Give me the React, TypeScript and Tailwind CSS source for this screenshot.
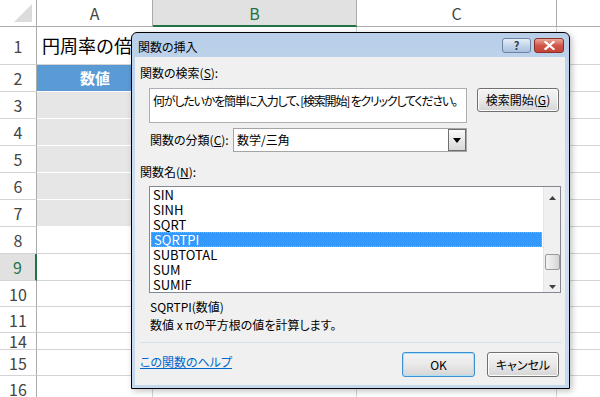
import React from 'react';

const rows = [
  { n: '1', h: 'h-[38px]' },
  { n: '2', h: 'h-[27px]' },
  { n: '3', h: 'h-[27px]' },
  { n: '4', h: 'h-[27px]' },
  { n: '5', h: 'h-[27px]' },
  { n: '6', h: 'h-[27px]' },
  { n: '7', h: 'h-[27px]' },
  { n: '8', h: 'h-[27px]' },
  { n: '9', h: 'h-[27px]' },
  { n: '10', h: 'h-[26px]' },
  { n: '11', h: 'h-[26px]' },
  { n: '14', h: 'h-[17px]' },
  { n: '15', h: 'h-[26px]' },
  { n: '16', h: 'h-[26px]' },
];

const funcs = ['SIN', 'SINH', 'SQRT', 'SQRTPI', 'SUBTOTAL', 'SUM', 'SUMIF'];

function CellA({ n }: { n: string }) {
  if (n === '1') {
    return (
      <div className="w-[116px] h-full border-b border-[#d4d4d4] flex items-center pl-[5px] whitespace-nowrap text-[18px] text-black overflow-visible">
        円周率の倍数の平方根
      </div>
    );
  }
  if (n === '2') {
    return (
      <div className="w-[116px] h-full bg-[#5b9bd5] border-b border-white flex items-center justify-center text-white font-bold text-[15px]">
        数値
      </div>
    );
  }
  if (['3', '4', '5', '6', '7'].includes(n)) {
    return <div className="w-[116px] h-full bg-[#e7e6e6] border-b border-white" />;
  }
  return <div className="w-[116px] h-full border-r border-b border-[#d4d4d4]" />;
}

function Sheet() {
  return (
    <div className="flex flex-col font-['Noto_Sans_CJK_JP',sans-serif]">
      <div className="flex h-[27px] text-[16px] text-[#444]">
        <div className="w-[37px] h-full border-r border-b border-[#ababab] flex items-end justify-end pr-[3px] pb-[3px]">
          <svg width="20" height="20" viewBox="0 0 20 20">
            <polygon points="19,1 19,19 1,19" fill="#dcdcdc" />
          </svg>
        </div>
        <div className="w-[116px] h-full border-r border-b border-[#ababab] flex items-center justify-center">A</div>
        <div className="w-[204px] h-full bg-[#e1e1e1] border-r border-[#ababab] border-b-2 border-b-[#217346] flex items-center justify-center text-[#217346]">B</div>
        <div className="w-[200px] h-full border-r border-b border-[#ababab] flex items-center justify-center">C</div>
        <div className="flex-1 h-full border-b border-[#ababab]" />
      </div>
      {rows.map((r) => (
        <div key={r.n} className={`flex ${r.h}`}>
          <div
            className={
              r.n === '9'
                ? 'w-[37px] h-full bg-[#e1e1e1] border-r-2 border-r-[#217346] border-b border-b-[#d4d4d4] flex items-center justify-center text-[16px] leading-none text-[#217346]'
                : 'w-[37px] h-full border-r border-r-[#ababab] border-b border-b-[#d4d4d4] flex items-center justify-center text-[16px] leading-none text-[#444]'
            }
          >
            {r.n}
          </div>
          <CellA n={r.n} />
          <div className="w-[204px] h-full border-r border-b border-[#d4d4d4]" />
          <div className="w-[200px] h-full border-r border-b border-[#d4d4d4]" />
          <div className="flex-1 h-full border-b border-[#d4d4d4]" />
        </div>
      ))}
    </div>
  );
}

function WinButton({ children, primary, className }: { children: React.ReactNode; primary?: boolean; className: string }) {
  return (
    <div
      className={`${className} rounded-[3px] border flex items-center justify-center text-[12px] text-black bg-gradient-to-b from-[#f4f4f4] via-[#e9e9e9] to-[#d5d5d5] ${
        primary ? 'border-[#3c8fd0] shadow-[inset_0_0_0_1px_#a9e1fb]' : 'border-[#707070] shadow-[inset_0_0_0_1px_#fcfcfc]'
      }`}
    >
      {children}
    </div>
  );
}

function Dialog() {
  return (
    <div className="absolute left-[131px] top-[32px] w-[439px] h-[357px] border border-black rounded-t-[6px] bg-gradient-to-b from-[#b9cfe9] via-[#d0e0f2] to-[#c4d8ee] flex flex-col shadow-[2px_2px_6px_rgba(0,0,0,0.25)] font-['Noto_Sans_CJK_JP',sans-serif] [font-feature-settings:'palt']">
      <div className="h-[24px] flex items-start pl-[6px] pr-[5px]">
        <div className="text-[12px] text-black mt-[5px]">関数の挿入</div>
        <div className="ml-auto flex gap-[3px] mt-[5px]">
          <div className="w-[29px] h-[15px] rounded-[3px] border border-[#6d83a3] bg-gradient-to-b from-[#e5eef8] via-[#c5d6ea] to-[#a9c1de] flex items-center justify-center text-[11px] font-bold text-[#2b3b52] leading-none">
            ?
          </div>
          <div className="w-[30px] h-[15px] rounded-[3px] border border-[#8a3028] bg-gradient-to-b from-[#e9a99a] via-[#d0584a] to-[#c4443a] flex items-center justify-center">
            <svg width="11" height="9" viewBox="0 0 11 9">
              <path d="M1.5 1 L9.5 8 M9.5 1 L1.5 8" stroke="#fff" strokeWidth="2.2" strokeLinecap="square" />
            </svg>
          </div>
        </div>
      </div>
      <div className="flex-1 ml-[3px] mr-[4px] mb-[3px] bg-[#f0f0f0] flex flex-col pl-[5px] text-[12px] text-black">
        <div className="mt-[7px] h-[18px] leading-[18px]">
          関数の検索(<span className="underline">S</span>):
        </div>
        <div className="mt-[6px] flex items-start">
          <div className="ml-[9px] w-[318px] h-[35px] border border-[#abadb3] bg-white pl-[3px] pt-[5px] leading-[14px] whitespace-nowrap overflow-hidden tracking-[-1.2px]">
            何がしたいかを簡単に入力して、[検索開始] をクリックしてください。
          </div>
          <WinButton className="ml-[10px] w-[82px] h-[24px]">
            検索開始(<span className="underline">G</span>)
          </WinButton>
        </div>
        <div className="mt-[5px] flex items-center h-[24px]">
          <div className="pl-[10px] w-[93px]">
            関数の分類(<span className="underline">C</span>):
          </div>
          <div className="w-[234px] h-[24px] border border-[#a5a5a5] bg-white flex items-center">
            <div className="flex-1 pl-[3px]">数学/三角</div>
            <div className="w-[18px] h-[22px] border border-[#6f6f6f] bg-gradient-to-b from-[#fafafa] to-[#d8d8d8] flex items-center justify-center">
              <svg width="8" height="5" viewBox="0 0 8 5">
                <polygon points="0,0 8,0 4,5" fill="#000" />
              </svg>
            </div>
          </div>
        </div>
        <div className="mt-[11px] h-[18px] leading-[18px]">
          関数名(<span className="underline">N</span>):
        </div>
        <div className="mt-[5px] ml-[9px] w-[412px] h-[107px] border border-[#828790] bg-white flex text-[13px]">
          <div className="flex-1 flex flex-col pr-[1px]">
            {funcs.map((f) => (
              <div
                key={f}
                className={
                  f === 'SQRTPI'
                    ? 'h-[15px] leading-[13px] pl-[2px] ml-[1px] bg-[#3399ff] text-white border border-dotted border-[#e0a060]'
                    : 'h-[15px] leading-[15px] pl-[3px]'
                }
              >
                {f}
              </div>
            ))}
          </div>
          <div className="w-[17px] h-full bg-[#f0f0f0] border-l border-[#e6e6e6] flex flex-col items-center">
            <svg className="mt-[9px]" width="7" height="4" viewBox="0 0 7 4">
              <polygon points="0,4 7,4 3.5,0" fill="#404040" />
            </svg>
            <div className="mt-[54px] w-[15px] h-[16px] rounded-[2px] border border-[#9a9a9a] bg-gradient-to-r from-[#f4f4f4] via-[#e6e6e6] to-[#d4d4d4]" />
            <svg className="mt-[15px]" width="7" height="4" viewBox="0 0 7 4">
              <polygon points="0,0 7,0 3.5,4" fill="#404040" />
            </svg>
          </div>
        </div>
        <div className="mt-[5px] pl-[10px] h-[18px] leading-[18px]">SQRTPI(数値)</div>
        <div className="pl-[10px] h-[18px] leading-[18px]">数値 x πの平方根の値を計算します。</div>
        <div className="mt-[8px] w-[421px] h-px bg-[#d5dfe5]" />
        <div className="mt-[9px] w-[421px] flex items-start pr-[2px]">
          <div className="mt-[1px] text-[#0066cc] underline">この関数のヘルプ</div>
          <WinButton primary className="ml-auto w-[73px] h-[25px]">
            OK
          </WinButton>
          <WinButton className="ml-[12px] w-[72px] h-[25px]">キャンセル</WinButton>
        </div>
      </div>
    </div>
  );
}

export default function App() {
  return (
    <div className="relative w-[600px] h-[397px] overflow-hidden bg-white">
      <Sheet />
      <Dialog />
    </div>
  );
}
